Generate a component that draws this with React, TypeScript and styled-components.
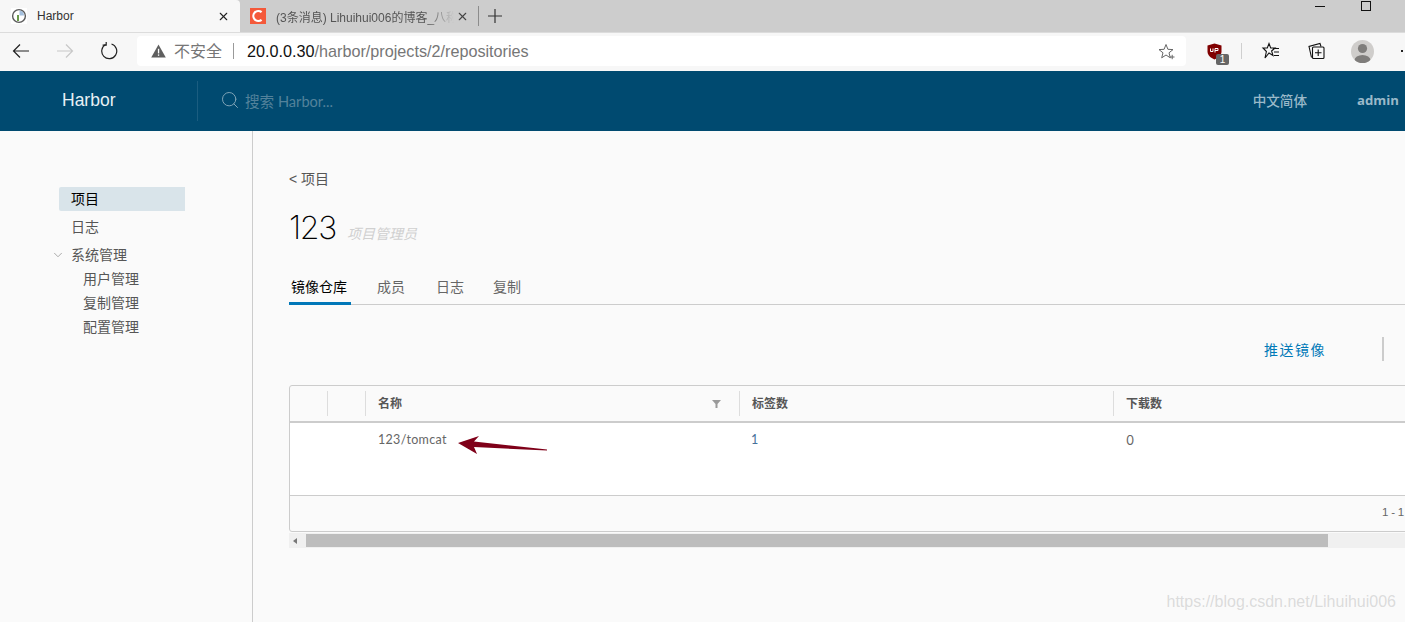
import React from 'react';
import styled, { createGlobalStyle } from 'styled-components';
import { ChevronDown, Search, X } from 'lucide-react';

const GlobalStyle = createGlobalStyle`
  html, body {
    margin: 0;
    padding: 0;
    height: 622px;
    overflow: hidden;
    background: #fafafa;
  }
  * {
    box-sizing: border-box;
  }
`;

const cjk = `"Liberation Sans", "Noto Sans CJK SC", sans-serif`;

const Page = styled.div`
  position: relative;
  width: 1405px;
  height: 622px;
  overflow: hidden;
  font-family: ${cjk};
  background: #fafafa;
`;

/* browser chrome */
const TabStrip = styled.div`
  height: 32px;
  background: #cdcdcd;
  display: flex;
  align-items: stretch;
`;

const Tab = styled.div<{ $active?: boolean }>`
  width: ${(p) => (p.$active ? '240px' : '238px')};
  height: 32px;
  display: flex;
  align-items: center;
  flex-shrink: 0;
  padding-left: ${(p) => (p.$active ? '11px' : '10px')};
  background: ${(p) => (p.$active ? '#f7f7f7' : 'transparent')};
  color: ${(p) => (p.$active ? '#333' : '#555')};
  border-radius: ${(p) => (p.$active ? '0 4px 0 0' : '0')};
  font-size: 12px;
`;

const TabTitle = styled.span<{ $width: number; $fade?: boolean }>`
  width: ${(p) => p.$width}px;
  margin-left: 10px;
  white-space: nowrap;
  overflow: hidden;
  ${(p) => (p.$fade ? 'mask-image: linear-gradient(to right, #000 150px, transparent 178px);' : '')}
`;

const TabDivider = styled.div`
  width: 1px;
  height: 20px;
  margin-top: 6px;
  background: #8c8c8c;
  flex-shrink: 0;
`;

const NewTab = styled.div`
  width: 32px;
  display: flex;
  align-items: center;
  justify-content: center;
  color: #333;
`;

const WindowControls = styled.div`
  margin-left: auto;
  display: flex;
  align-items: flex-start;
  gap: 36px;
  padding-right: 34px;
`;

const Minimize = styled.div`
  width: 10px;
  height: 1px;
  margin-top: 6px;
  background: #111;
`;

const Maximize = styled.div`
  width: 10px;
  height: 10px;
  border: 1px solid #111;
  margin-top: 1px;
`;

const Toolbar = styled.div`
  height: 39px;
  background: #f7f7f7;
  display: flex;
  align-items: center;
  border-top: 1px solid #dcdcdc;
  padding-bottom: 2px;
`;

const NavButtons = styled.div`
  width: 137px;
  display: flex;
  align-items: center;
  gap: 26px;
  padding-left: 12px;
  flex-shrink: 0;
`;

const AddressBar = styled.div`
  width: 1049px;
  height: 30px;
  background: #fff;
  border-radius: 4px;
  display: flex;
  align-items: center;
  padding-left: 14px;
  flex-shrink: 0;
  line-height: 30px;
`;

const Insecure = styled.span`
  margin: 2px 0 0 8px;
  font-size: 16px;
  color: #767676;
  height: 30px;
`;

const AddressDivider = styled.span`
  width: 1px;
  height: 16px;
  margin: 0 13px 0 11px;
  background: #9a9a9a;
`;

const Host = styled.span`
  font-size: 16.2px;
  color: #111;
`;

const UrlPath = styled.span`
  font-size: 16.2px;
  color: #767676;
`;

const StarSlot = styled.div`
  margin-left: auto;
  padding-right: 11px;
  display: flex;
`;

const ToolIcons = styled.div`
  position: relative;
  flex: 1;
  display: flex;
  align-items: center;
  height: 100%;
  padding-left: 21px;
`;

const Badge = styled.span`
  position: absolute;
  left: 30px;
  top: 21px;
  width: 13px;
  height: 11px;
  border-radius: 2px;
  background: #666;
  color: #fff;
  font-size: 10px;
  line-height: 11px;
  text-align: center;
`;

const ToolDivider = styled.div`
  width: 1px;
  height: 16px;
  margin: 0 19px 0 19px;
  background: #cfcfcf;
`;

const ToolIcon = styled.div`
  width: 20px;
  height: 20px;
  margin-right: 25px;
  flex-shrink: 0;
`;

const Avatar = styled.div`
  width: 23px;
  height: 23px;
  border-radius: 50%;
  background: #cfcdcb;
  flex-shrink: 0;
  overflow: hidden;
`;

const Dot = styled.span`
  width: 2px;
  height: 2px;
  margin-left: 27px;
  background: #222;
  flex-shrink: 0;
`;

/* harbor header */
const Header = styled.header`
  height: 60px;
  background: #004a70;
  display: flex;
  align-items: center;
  color: #fff;
`;

const Brand = styled.div`
  width: 197px;
  padding: 0 0 2px 62px;
  font-size: 17.5px;
  color: #e8f1f5;
`;

const SearchBox = styled.div`
  height: 40px;
  border-left: 1px solid #1b5d80;
  display: flex;
  align-items: center;
  padding: 0 0 2px 22px;
  color: #7fa4b7;
`;

const SearchHint = styled.span`
  margin-left: 5px;
  font-size: 14.6px;
  color: #53829b;
  font-family: "Lato", "Noto Sans CJK SC", sans-serif;
`;

const HeaderLinks = styled.div`
  margin-left: auto;
  display: flex;
  align-items: center;
  gap: 50px;
  padding: 0 6px 2px 0;
  color: #9ab9c9;
  font-family: "Open Sans", "Noto Sans CJK SC", sans-serif;
`;

const HeaderLink = styled.span<{ $latin?: boolean }>`
  font-size: ${(p) => (p.$latin ? '13.2px' : '13.6px')};
  font-weight: ${(p) => (p.$latin ? 700 : 500)};
`;

/* page body */
const Body = styled.div`
  display: flex;
  height: 491px;
`;

const Sidebar = styled.nav`
  width: 253px;
  flex-shrink: 0;
  border-right: 1px solid #ccc;
  padding: 56px 0 0 59px;
  color: #565656;
  font-size: 14px;
`;

const NavItem = styled.div<{ $active?: boolean }>`
  width: 126px;
  height: 24px;
  line-height: 24px;
  padding-left: 12px;
  margin-bottom: ${(p) => (p.$active ? '4px' : '0')};
  border-radius: 2px 0 0 2px;
  background: ${(p) => (p.$active ? '#d9e4ea' : 'transparent')};
  color: ${(p) => (p.$active ? '#000' : '#565656')};
`;

const NavGroup = styled.div`
  position: relative;
  height: 24px;
  margin-top: 4px;
  line-height: 24px;
  padding-left: 12px;
`;

const GroupCaret = styled.span`
  position: absolute;
  left: -8px;
  top: 5px;
  display: flex;
  color: #999;
`;

const SubItem = styled.div`
  height: 24px;
  line-height: 24px;
  padding-left: 24px;
`;

const Content = styled.main`
  flex: 1;
  min-width: 0;
  padding: 38px 0 0 36px;
`;

const BackLink = styled.div`
  height: 20px;
  line-height: 20px;
  font-size: 14px;
  color: #565656;
`;

const TitleRow = styled.div`
  display: flex;
  align-items: baseline;
  margin-top: 17px;
  height: 44px;
`;

const Title = styled.h1`
  margin: 0;
  font-family: "Inter", sans-serif;
  font-weight: 200;
  font-size: 32px;
  letter-spacing: -1.3px;
  line-height: 44px;
  color: #000;
`;

const Role = styled.span`
  margin-left: 11px;
  font-size: 14px;
  font-style: italic;
  color: #d0d0d0;
`;

const TabBar = styled.div`
  margin-top: 23px;
  height: 32px;
  display: flex;
  border-bottom: 1px solid #ccc;
`;

const PageTab = styled.div<{ $active?: boolean; $gap: number }>`
  width: ${(p) => (p.$active ? '62px' : 'auto')};
  height: ${(p) => (p.$active ? '32px' : '31px')};
  margin-right: ${(p) => p.$gap}px;
  padding: 0 ${(p) => (p.$active ? '2px' : '0')};
  line-height: 28px;
  font-size: 14px;
  white-space: nowrap;
  color: ${(p) => (p.$active ? '#000' : '#666')};
  border-bottom: ${(p) => (p.$active ? '3px solid #0077b8' : 'none')};
`;

const ActionRow = styled.div`
  height: 24px;
  margin-top: 32px;
  display: flex;
  align-items: center;
`;

const PushLink = styled.span`
  margin-left: 975px;
  font-size: 14px;
  letter-spacing: 1.5px;
  color: #0079b8;
  white-space: nowrap;
`;

const ActionDivider = styled.span`
  width: 2px;
  height: 24px;
  margin-left: 56px;
  background: #ccc;
  flex-shrink: 0;
`;

const Grid = styled.div`
  width: 1300px;
  height: 147px;
  margin-top: 24px;
  border: 1px solid #ccc;
  border-radius: 3px 0 0 3px;
  display: flex;
  flex-direction: column;
  background: #fafafa;
`;

const GridHead = styled.div`
  height: 37px;
  display: flex;
  align-items: center;
  border-bottom: 2px solid #ccc;
  flex-shrink: 0;
`;

const HeadCell = styled.div<{ $width: number }>`
  position: relative;
  width: ${(p) => p.$width}px;
  height: 25px;
  flex-shrink: 0;
  display: flex;
  align-items: center;
  padding: 0 0 2px 12px;
  border-right: 1px solid #ddd;
  font-size: 12px;
  font-weight: 700;
  color: #565656;
  &:last-child {
    border-right: none;
  }
`;

const FilterMark = styled.svg`
  position: absolute;
  right: 18px;
  top: 9px;
`;

const GridBody = styled.div`
  height: 72px;
  background: #fff;
  display: flex;
  align-items: flex-start;
  padding-top: 9px;
  font-family: "Lato", "Noto Sans CJK SC", sans-serif;
  flex-shrink: 0;
`;

const RowCell = styled.div<{ $width: number; $blue?: boolean; $wide?: boolean }>`
  width: ${(p) => p.$width}px;
  padding-left: ${(p) => (p.$blue ? '11px' : '12px')};
  flex-shrink: 0;
  font-size: 12.5px;
  line-height: 16px;
  letter-spacing: 0.3px;
  color: ${(p) => (p.$blue ? '#45709a' : '#666')};
  ${(p) => (p.$wide ? 'font-family: "Inter", sans-serif; font-size: 13px;' : '')}
`;

const GridFoot = styled.div`
  flex: 1;
  border-top: 1px solid #ccc;
  display: flex;
  align-items: center;
  padding: 0 0 4px 1092px;
  font-size: 11.5px;
  letter-spacing: -0.2px;
  color: #666;
`;

const ScrollBar = styled.div`
  width: 1300px;
  height: 15px;
  margin-top: 1px;
  background: #f0f0f0;
  display: flex;
  align-items: center;
  padding-left: 4px;
`;

const ScrollThumb = styled.div`
  width: 1022px;
  height: 13px;
  margin-left: 9px;
  background: #bdbdbd;
`;

const ScrollArrow = styled.span`
  width: 0;
  height: 0;
  border-top: 3px solid transparent;
  border-bottom: 3px solid transparent;
  border-right: 4px solid #777;
`;

const Annotation = styled.svg`
  position: absolute;
  left: 450px;
  top: 430px;
`;

const Watermark = styled.div`
  position: absolute;
  right: 9px;
  top: 593px;
  font-family: "Liberation Sans", sans-serif;
  font-size: 16px;
  color: rgba(170, 170, 170, 0.4);
`;

const HarborIcon = () => (
  <svg width="16" height="16" viewBox="0 0 16 16" fill="none">
    <rect width="16" height="16" fill="#fff" />
    <circle cx="8" cy="8" r="6.4" stroke="#5a5a5a" strokeWidth="1.4" />
    <path d="M8.5 7.5 L8.5 2.6 A5 5 0 0 1 13 7.5 Z" fill="#a4c0de" />
    <rect x="6" y="7" width="2" height="6" fill="#6a9a4a" />
  </svg>
);

const CsdnIcon = () => (
  <svg width="16" height="16" viewBox="0 0 16 16">
    <rect width="16" height="16" fill="#f4593a" />
    <path d="M11.6 4.2 A5 5 0 1 0 11.6 11.8" fill="none" stroke="#fff" strokeWidth="2.2" />
  </svg>
);

const BackIcon = ({ color }: { color: string }) => (
  <svg width="18" height="16" viewBox="0 0 18 16" fill="none" stroke={color} strokeWidth="1.2">
    <path d="M17 8H1.5M8 1.5L1.5 8L8 14.5" />
  </svg>
);

const ForwardIcon = () => (
  <svg width="18" height="16" viewBox="0 0 18 16" fill="none" stroke="#c8c8c8" strokeWidth="1.2">
    <path d="M1 8H16.5M10 1.5L16.5 8L10 14.5" />
  </svg>
);

const ReloadIcon = () => (
  <svg width="18" height="18" viewBox="0 0 18 18" fill="none" stroke="#222" strokeWidth="1.2">
    <path d="M5.6 2.6 A7.5 7.5 0 1 0 11.5 2" />
    <path d="M5.2 -0.2 V3.2 H1.6" transform="translate(1 0)" />
  </svg>
);

const WarningIcon = () => (
  <svg width="15" height="14" viewBox="0 0 15 14">
    <path d="M7.5 0.5L14.8 13.5H0.2Z" fill="#5f5f5f" />
    <rect x="6.9" y="4.8" width="1.3" height="4.6" fill="#fff" />
    <rect x="6.9" y="10.4" width="1.3" height="1.4" fill="#fff" />
  </svg>
);

const AddFavoriteIcon = () => (
  <svg width="17" height="17" viewBox="0 0 17 17" fill="none" stroke="#666" strokeWidth="1">
    <path d="M8 1.5L9.9 6.3L15 6.6L11 9.8L12.3 14.8L8 12L3.7 14.8L5 9.8L1 6.6L6.1 6.3Z" />
    <path d="M12 14H16.5M14.2 11.8V16.2" />
  </svg>
);

const ShieldIcon = () => (
  <svg width="15" height="17" viewBox="0 0 15 17">
    <path d="M7.5 0.5L14.5 2.5V8.5C14.5 12 11.5 15 7.5 16.5C3.5 15 0.5 12 0.5 8.5V2.5Z" fill="#800000" />
    <path d="M3.5 5.5V8.5H6V5.5M8 9.5V5.5H11V7.5H8" fill="none" stroke="#fff" strokeWidth="1" />
  </svg>
);

const FavoritesIcon = () => (
  <svg width="20" height="20" viewBox="0 0 20 20" fill="none" stroke="#111" strokeWidth="1.1">
    <path d="M8 2.5L9.7 7H14L10.6 10L12 14.5L8 12L4 17L5.4 10.5L2 7H6.3Z" />
    <path d="M12 7.5H18M13 11H18M13 14.5H18" />
  </svg>
);

const CollectionsIcon = () => (
  <svg width="20" height="20" viewBox="0 0 20 20" fill="none" stroke="#111" strokeWidth="1.1">
    <path d="M5.5 16.5L3 5.5L14 2.5L15 5.5" />
    <rect x="6.5" y="6" width="11.5" height="11.5" rx="1" fill="#f7f7f7" />
    <path d="M12.2 8.5V15M9 11.8H15.5" />
  </svg>
);

const AvatarFace = () => (
  <svg width="23" height="23" viewBox="0 0 23 23">
    <circle cx="11.5" cy="8.5" r="4.6" fill="#7f7d7b" />
    <ellipse cx="11.5" cy="20.5" rx="8" ry="5.5" fill="#7f7d7b" />
  </svg>
);

const App = () => (
  <Page>
    <GlobalStyle />
    <TabStrip>
      <Tab $active>
        <HarborIcon />
        <TabTitle $width={180}>Harbor</TabTitle>
        <X size={13} strokeWidth={2} color="#222" />
      </Tab>
      <Tab>
        <CsdnIcon />
        <TabTitle $width={180} $fade>(3条消息) Lihuihui006的博客_八称</TabTitle>
        <X size={13} strokeWidth={2} color="#444" />
      </Tab>
      <TabDivider />
      <NewTab>
        <svg width="14" height="14" viewBox="0 0 14 14" stroke="#333" strokeWidth="1.2">
          <path d="M7 0V14M0 7H14" />
        </svg>
      </NewTab>
      <WindowControls>
        <Minimize />
        <Maximize />
      </WindowControls>
    </TabStrip>
    <Toolbar>
      <NavButtons>
        <BackIcon color="#222" />
        <ForwardIcon />
        <ReloadIcon />
      </NavButtons>
      <AddressBar>
        <WarningIcon />
        <Insecure>不安全</Insecure>
        <AddressDivider />
        <Host>20.0.0.30</Host>
        <UrlPath>/harbor/projects/2/repositories</UrlPath>
        <StarSlot>
          <AddFavoriteIcon />
        </StarSlot>
      </AddressBar>
      <ToolIcons>
        <ShieldIcon />
        <Badge>1</Badge>
        <ToolDivider />
        <ToolIcon>
          <FavoritesIcon />
        </ToolIcon>
        <ToolIcon>
          <CollectionsIcon />
        </ToolIcon>
        <Avatar>
          <AvatarFace />
        </Avatar>
        <Dot />
      </ToolIcons>
    </Toolbar>
    <Header>
      <Brand>Harbor</Brand>
      <SearchBox>
        <Search size={20} strokeWidth={1.2} />
        <SearchHint>搜索 Harbor...</SearchHint>
      </SearchBox>
      <HeaderLinks>
        <HeaderLink>中文简体</HeaderLink>
        <HeaderLink $latin>admin</HeaderLink>
      </HeaderLinks>
    </Header>
    <Body>
      <Sidebar>
        <NavItem $active>项目</NavItem>
        <NavItem>日志</NavItem>
        <NavGroup>
          <GroupCaret>
            <ChevronDown size={14} strokeWidth={1.4} />
          </GroupCaret>
          系统管理
        </NavGroup>
        <SubItem>用户管理</SubItem>
        <SubItem>复制管理</SubItem>
        <SubItem>配置管理</SubItem>
      </Sidebar>
      <Content>
        <BackLink>&lt; 项目</BackLink>
        <TitleRow>
          <Title>123</Title>
          <Role>项目管理员</Role>
        </TitleRow>
        <TabBar>
          <PageTab $active $gap={26}>镜像仓库</PageTab>
          <PageTab $gap={31}>成员</PageTab>
          <PageTab $gap={29}>日志</PageTab>
          <PageTab $gap={0}>复制</PageTab>
        </TabBar>
        <ActionRow>
          <PushLink>推送镜像</PushLink>
          <ActionDivider />
        </ActionRow>
        <Grid>
          <GridHead>
            <HeadCell $width={38} />
            <HeadCell $width={38} />
            <HeadCell $width={374}>
              名称
              <FilterMark width="9" height="8" viewBox="0 0 9 8">
                <path d="M0 0H9L5.5 4V8H3.5V4Z" fill="#9a9a9a" />
              </FilterMark>
            </HeadCell>
            <HeadCell $width={374}>标签数</HeadCell>
            <HeadCell $width={300}>下载数</HeadCell>
          </GridHead>
          <GridBody>
            <RowCell $width={76} />
            <RowCell $width={374}>123/tomcat</RowCell>
            <RowCell $width={374} $blue>1</RowCell>
            <RowCell $width={300} $wide>0</RowCell>
          </GridBody>
          <GridFoot>1 - 1</GridFoot>
        </Grid>
        <ScrollBar>
          <ScrollArrow />
          <ScrollThumb />
        </ScrollBar>
      </Content>
    </Body>
    <Annotation width="100" height="30" viewBox="0 0 100 30">
      <path d="M8 13 L29 6 L24 11.5 L97 19.5 L97 20.5 L24 17 L27 24 Z" fill="#7f0019" />
    </Annotation>
    <Watermark>https://blog.csdn.net/Lihuihui006</Watermark>
  </Page>
);

export default App;
